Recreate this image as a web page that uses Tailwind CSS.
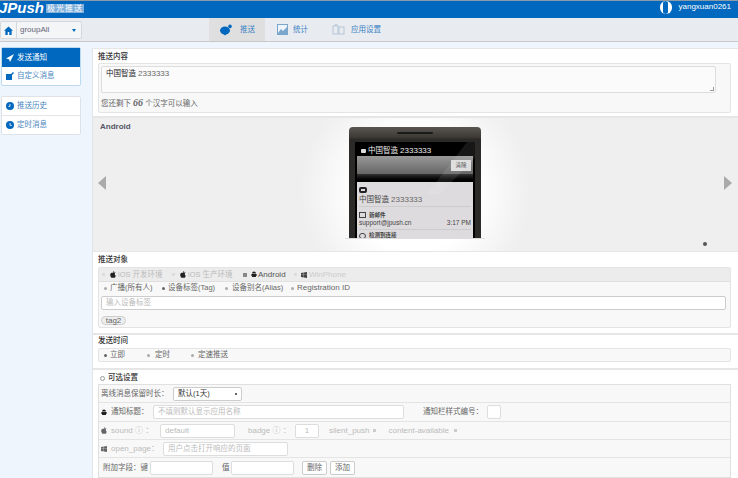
<!DOCTYPE html>
<html lang="zh">
<head>
<meta charset="UTF-8">
<title>JPush</title>
<script src="https://cdn.jsdelivr.net/npm/@tailwindcss/browser@4"></script>
</head>
<body class="w-[738px] h-[478px] overflow-hidden bg-[#eef5fd] text-[7.5px] leading-[10px] text-[#555] font-['Liberation_Sans','Noto_Sans_CJK_SC',sans-serif]">
  <!-- Top bar -->
  <div class="h-[18px] bg-[#0068be] border-t border-[#8a9aa8] flex items-center justify-between overflow-hidden">
    <div class="flex items-center -mt-[4px] -ml-px">
      <span class="text-white italic font-bold text-[15px] leading-[15px]">JPush</span>
      <span class="ml-[2px] mt-[2px] bg-[#7fb0dc] text-white text-[8px] leading-[9px] px-px tracking-[1px]">极光推送</span>
    </div>
    <div class="flex items-center gap-[7px] pr-[7px] -mt-[5px]">
      <span class="w-[12px] h-[13px] rounded-full bg-white flex justify-center overflow-hidden"><span class="w-[5px] h-[13px] bg-[#0068be] rounded-full"></span></span>
      <span class="text-white text-[8px]">yangxuan0261</span>
    </div>
  </div>
  <!-- Sub nav -->
  <div class="h-[24px] bg-[#e8ebf0] border-b border-[#c8c8c8] flex">
    <div class="w-[209px] pt-[3px]">
      <div class="w-[82px] h-[18px] bg-[#f3f5f7] border border-[#d5d8dc] rounded-[2px] flex items-center">
        <div class="w-[16px] h-full border-r border-[#d5d8dc] flex items-center justify-center">
          <svg width="9" height="9" viewBox="0 0 10 10"><path d="M5 .5 0 5.2h1.5V10h2.6V6.6h1.8V10h2.600V5.200H10z" fill="#0068be"/></svg>
        </div>
        <span class="ml-[3px] text-[#667] text-[8px]">groupAll</span>
        <span class="ml-auto mr-[5px] border-x-[2.5px] border-x-transparent border-t-[3px] border-t-[#0068be]"></span>
      </div>
    </div>
    <div class="w-[56px] bg-[#dfdfdf] flex items-center pl-[11px] gap-[8px] text-[#3b82c4]">
      <svg width="12" height="12" viewBox="0 0 12 12"><ellipse cx="5" cy="6.5" rx="5" ry="4" fill="#0068be"/><path d="M3 9.5h4l-2 2z" fill="#0068be"/><circle cx="10" cy="2.4" r="1.8" fill="#0068be"/></svg>
      <span>推送</span>
    </div>
    <div class="w-[56px] flex items-center pl-[12px] gap-[5px] text-[#3b82c4]">
      <svg width="11" height="11" viewBox="0 0 11 11"><rect x=".5" y=".5" width="10" height="10" fill="#eef4fa" stroke="#7ba6cc"/><path d="M1 9 4 5l2 2 4-4v7H1z" fill="#7ba6cc"/></svg>
      <span>统计</span>
    </div>
    <div class="flex items-center pl-[11px] gap-[6px] text-[#3b82c4]">
      <svg width="13" height="11" viewBox="0 0 13 11"><rect x="1" y="2" width="5" height="8" fill="none" stroke="#b5c6d6"/><rect x="7" y="3" width="5" height="7" fill="none" stroke="#b5c6d6"/><path d="M2 2 4 0l2 2" fill="none" stroke="#b5c6d6"/></svg>
      <span>应用设置</span>
    </div>
  </div>
  <div class="flex">
    <!-- Sidebar -->
    <div class="w-[92px] pt-[6px] pl-px shrink-0">
      <div class="w-[80px] h-[39px] border border-[#bcd9f2] rounded-[2px] bg-white -mt-px">
        <div class="h-[19px] bg-[#0068be] text-white flex items-center gap-[3px] pl-[4px]">
          <svg width="8" height="8" viewBox="0 0 8 8"><path d="M8 0 0 4.5l3 .7L4 8z" fill="#fff"/></svg>
          <span>发送通知</span>
        </div>
        <div class="h-[18px] text-[#4a86bd] flex items-center gap-[3px] pl-[4px]">
          <svg width="8" height="8" viewBox="0 0 8 8"><rect y="2" width="6" height="6" fill="#0068be"/><path d="M4 3 7 0l1 1-3 3z" fill="#0068be"/></svg>
          <span>自定义消息</span>
        </div>
      </div>
      <div class="w-[80px] h-[39px] mt-[10px] border border-[#dfe3e8] rounded-[2px] bg-white divide-y divide-[#e4e7ea]">
        <div class="h-[19px] text-[#4a86bd] flex items-center gap-[3px] pl-[4px]">
          <svg width="8" height="8" viewBox="0 0 8 8"><circle cx="4" cy="4" r="4" fill="#0068be"/><path d="M4 2v2.4H2.4" fill="none" stroke="#fff" stroke-width=".8"/></svg>
          <span>推送历史</span>
        </div>
        <div class="h-[18px] text-[#4a86bd] flex items-center gap-[3px] pl-[4px]">
          <svg width="8" height="8" viewBox="0 0 8 8"><circle cx="4" cy="4" r="4" fill="#0068be"/><path d="M4 2v2.4h1.8" fill="none" stroke="#fff" stroke-width=".8"/></svg>
          <span>定时消息</span>
        </div>
      </div>
    </div>
    <!-- Main -->
    <div class="w-[646px] mt-[6px] bg-white border-l border-[#e2e5e8]">
      <!-- content -->
      <div class="h-[70px] px-[5px] pt-[3px] border-y border-b-2 border-[#e6e6e6]">
        <div class="font-medium text-[#333] h-[10px]">推送内容</div>
        <div class="mt-px h-[50px] w-[633px] bg-[#f8f8f8] border border-[#e4e4e4] rounded-[2px] pl-[2px] pt-[2px]">
          <div class="relative w-[615px] h-[27px] bg-[#fbfbfb] border border-[#ddd] rounded-[2px] px-[4px] pt-[2px] text-[#222]">
            中国智造 <span class="text-[8px] text-[#666]">2333333</span>
            <span class="absolute right-px bottom-px w-[4px] h-[4px] border-b border-r border-[#999]"></span>
          </div>
          <div class="mt-[5px] text-[#666]">您还剩下 <b class="font-['Liberation_Serif',serif] italic text-[10px]">66</b> 个汉字可以输入</div>
        </div>
      </div>
      <!-- preview -->
      <div class="relative h-[133px] bg-[radial-gradient(circle_at_50%_55%,#ffffff_0,#ffffff_60px,#efefef_115px)] overflow-hidden">
        <div class="absolute left-[7px] top-[4px] font-bold text-[8px] text-[#556]">Android</div>
        <span class="absolute left-[5px] top-[58px] border-y-[7px] border-y-transparent border-r-[8px] border-r-[#aaa]"></span>
        <span class="absolute right-[6px] top-[58px] border-y-[7px] border-y-transparent border-l-[8px] border-l-[#aaa]"></span>
        <span class="absolute left-[610px] top-[124px] w-[4px] h-[4px] rounded-full bg-[#555]"></span>
        <!-- phone -->
        <div class="absolute left-[252px] top-[120px] w-[140px] h-px bg-[#ddd]"></div>
        <div class="absolute left-[256px] top-[9px] w-[132px] h-[111px] bg-[linear-gradient(#5a5550,#3a3733_11px,#2b2a28_12px)] rounded-t-[4px] overflow-hidden pt-[15px] px-[6px]">
          <div class="absolute left-[48px] top-[5px] w-[36px] h-[2px] bg-[#1a1a1a] rounded-full"></div>
          <div class="relative h-[96px] bg-black pt-[5px] px-[2px]">
            <div class="h-[8px] flex items-center gap-[2px] pl-[4px] text-[#eee]">
              <span class="w-[5px] h-[4px] bg-[#ddd] rounded-[1px]"></span><span>中国智造 <span class="text-[8px]">2333333</span></span>
            </div>
            <div class="mt-px h-[18px] bg-gradient-to-b from-[#999] to-[#666] flex items-center justify-end pr-[2px]">
              <span class="w-[20px] h-[11px] bg-[#ddd] text-[#444] text-[5.5px] leading-[11px] text-center">清除</span>
            </div>
            <div class="h-[8px] bg-gradient-to-b from-[#333] to-black"></div>
            <div class="h-[56px] bg-[#dddbdd] px-[2px] pt-[5px] text-[#444]">
              <span class="block w-[8px] h-[6px] border-2 border-[#222] rounded-[2px]"></span>
              <div class="h-[11px] mt-[1px] leading-[11px] border-b border-[#ccc] box-content pb-px">中国智造 <span class="text-[8px] text-[#666]">2333333</span></div>
              <div class="mt-[4px] text-[5.5px] leading-[8px] font-bold flex items-center gap-[3px]"><span class="w-[7px] h-[6px] border border-[#444]"></span>新邮件</div>
              <div class="text-[6.5px] leading-[8px] flex justify-between pb-[2px] border-b border-[#ccc]"><span>support@jpush.cn</span><span>3:17 PM</span></div>
              <div class="mt-[2px] flex items-center gap-[3px] text-[5.5px] leading-[7px] font-bold"><span class="w-[7px] h-[6px] rounded-full border border-[#444]"></span>检测到连接</div>
            </div>
            <svg class="absolute left-0 top-0" width="120" height="96" viewBox="0 0 120 96"><path d="M112 0h8v16L85 52H72z" fill="#fff" fill-opacity=".09"/></svg>
          </div>
        </div>
      </div>
      <!-- target -->
      <div class="h-[84px] px-[5px] pt-[3px] border-t border-b-2 border-[#e6e6e6]">
        <div class="font-medium text-[#333] h-[10px]">推送对象</div>
        <div class="mt-[2px] w-[633px] h-[61px] bg-[#f8f8f8] border border-[#e4e4e4] rounded-[2px]">
          <div class="h-[14px] bg-[#ececec] border-b border-[#e0e0e0] flex items-center text-[#bbb]">
            <span class="w-[73px] flex items-center pl-[3px]">
              <span class="w-[3px] h-[3px] bg-[#ddd] mr-[5px]"></span>
              <svg class="mr-[2px]" width="6" height="7" viewBox="0 0 6 7"><path d="M3 1.800C2 1.400.4 1.600.2 3.600c-.1 1.500 1 3.400 1.800 3.300.5 0 .6-.3 1-.3s.5.3 1 .3c.7 0 1.500-1.100 1.800-2.200-1.300-.6-1.400-2.500-.1-3C5.200 1.300 3.900 1.300 3 1.800zM3 1.500C3 .8 3.500.1 4.200 0c.1.800-.5 1.500-1.200 1.500z" fill="#222"/></svg>
              iOS 开发环境</span>
            <span class="w-[71px] flex items-center">
              <span class="w-[3px] h-[3px] bg-[#ddd] mr-[5px]"></span>
              <svg class="mr-[2px]" width="6" height="7" viewBox="0 0 6 7"><path d="M3 1.800C2 1.400.4 1.600.2 3.600c-.1 1.500 1 3.400 1.800 3.300.5 0 .6-.3 1-.3s.5.3 1 .3c.7 0 1.500-1.100 1.800-2.200-1.300-.6-1.400-2.500-.1-3C5.200 1.300 3.900 1.300 3 1.800zM3 1.500C3 .8 3.500.1 4.200 0c.1.800-.5 1.500-1.200 1.500z" fill="#222"/></svg>
              iOS 生产环境</span>
            <span class="w-[51px] flex items-center text-[#555]">
              <span class="w-[4px] h-[4px] bg-[#888] mr-[4px]"></span>
              <svg class="mr-[1px]" width="6" height="7" viewBox="0 0 6 7"><path d="M1 2.500a2 2 0 0 1 4 0zM1 2.900h4v2.500a.5.5 0 0 1-.5.5h-3a.5.5 0 0 1-.5-.5zM0 2.900h.6v2H0zM5.400 2.900H6v2h-.6z" fill="#222"/></svg>
              <span class="text-[8px]">Android</span></span>
            <span class="flex items-center text-[8px] text-[#ccc]">
              <span class="w-[3px] h-[3px] bg-[#ddd] mr-[4px]"></span>
              <svg class="mr-[2px]" width="6" height="6" viewBox="0 0 6 6"><path d="M0 1 2.700.6v2.200H0zM3 .5 6 0v2.800H3zM0 3.100h2.700v2.300L0 5zM3 3.100h3V6l-3-.5z" fill="#444"/></svg>
              WinPhone</span>
          </div>
          <div class="h-[14px] pb-[2px] flex items-center text-[#666]">
            <span class="w-[62px] flex items-center pl-[5px]"><span class="w-[3px] h-[3px] rounded-full bg-[#aaa] mr-[3px]"></span>广播(所有人)</span>
            <span class="w-[63px] flex items-center ml-px"><span class="w-[3px] h-[3px] rounded-full bg-[#666] mr-[3px]"></span>设备标签(Tag)</span>
            <span class="w-[66px] flex items-center"><span class="w-[3px] h-[3px] rounded-full bg-[#aaa] mr-[4px]"></span>设备别名(Alias)</span>
            <span class="flex items-center text-[8px]"><span class="w-[3px] h-[3px] rounded-full bg-[#aaa] mr-[3px]"></span>Registration ID</span>
          </div>
          <div class="ml-[2px] w-[625px] h-[14px] bg-white border border-[#ccc] rounded-[2px] pl-[4px] text-[#bbb] leading-[12px]">输入设备标签</div>
          <div class="mt-[6px] ml-[2px] w-[25px] h-[9px] bg-[#eee] border border-[#ccc] rounded-full text-center text-[8px] text-[#666] leading-[7px]">tag2</div>
        </div>
      </div>
      <!-- time -->
      <div class="h-[35px] px-[5px] pt-px border-b-2 border-[#e6e6e6]">
        <div class="font-medium text-[#333] h-[10px]">发送时间</div>
        <div class="mt-[2px] w-[633px] h-[14px] bg-[#f8f8f8] border border-[#e4e4e4] rounded-[2px] flex items-center text-[#666]">
          <span class="w-[48px] flex items-center pl-[5px]"><span class="w-[3px] h-[3px] rounded-full bg-[#666] mr-[3px]"></span>立即</span>
          <span class="w-[44px] flex items-center"><span class="w-[3px] h-[3px] rounded-full bg-[#aaa] mr-[5px]"></span>定时</span>
          <span class="flex items-center"><span class="w-[3px] h-[3px] rounded-full bg-[#aaa] mr-[4px]"></span>定速推送</span>
        </div>
      </div>
      <!-- options -->
      <div class="px-[5px] pt-[3px]">
        <div class="flex items-center gap-[3px] font-medium text-[#333] h-[10px] pl-[2px]"><span class="w-[5px] h-[5px] rounded-full border border-[#999]"></span>可选设置</div>
        <div class="mt-px w-[633px] border border-[#e0e0e0] bg-[#f8f8f8] divide-y divide-[#e4e4e4] text-[#666]">
          <div class="h-[18px] flex items-center pl-[2px]">
            <span class="w-[72px]">离线消息保留时长：</span>
            <div class="w-[69px] h-[14px] bg-white border border-[#ccc] rounded-[2px] flex items-center px-[4px] text-[#333]">默认(1天)<span class="ml-auto w-[2px] h-[2px] bg-[#333] rounded-full"></span></div>
          </div>
          <div class="h-[19px] flex items-center pl-[2px]">
            <svg class="mr-[4px]" width="6" height="7" viewBox="0 0 6 7"><path d="M1 2.500a2 2 0 0 1 4 0zM1 2.900h4v2.500a.5.5 0 0 1-.5.5h-3a.5.5 0 0 1-.5-.5zM0 2.900h.6v2H0zM5.400 2.900H6v2h-.6z" fill="#222"/></svg>
            <span class="w-[42px]">通知标题：</span>
            <div class="w-[251px] h-[14px] bg-white border border-[#ddd] rounded-[2px] pl-[4px] text-[#bbb] leading-[12px]">不填则默认显示应用名称</div>
            <span class="ml-[19px] w-[64px]">通知栏样式编号：</span>
            <div class="w-[14px] h-[14px] bg-white border border-[#ddd] rounded-[2px]"></div>
          </div>
          <div class="h-[18px] flex items-center pl-[2px] text-[8px] text-[#bbb]">
            <svg class="mr-[4px]" width="6" height="7" viewBox="0 0 6 7"><path d="M3 1.800C2 1.400.4 1.600.2 3.600c-.1 1.500 1 3.400 1.800 3.300.5 0 .6-.3 1-.3s.5.3 1 .3c.7 0 1.500-1.100 1.800-2.200-1.300-.6-1.400-2.500-.1-3C5.200 1.300 3.900 1.300 3 1.800zM3 1.500C3 .8 3.500.1 4.200 0c.1.800-.5 1.500-1.200 1.500z" fill="#666"/></svg>
            <span class="w-[49px]">sound ⓘ ：</span>
            <div class="w-[75px] h-[14px] bg-white border border-[#ddd] rounded-[2px] pl-[4px] leading-[12px]">default</div>
            <span class="ml-[13px] w-[47px]">badge ⓘ ：</span>
            <div class="w-[24px] h-[14px] bg-white border border-[#ddd] rounded-[2px] text-center leading-[12px]">1</div>
            <span class="ml-[10px]">silent_push</span><span class="w-[3px] h-[3px] bg-[#ccc] mx-[4px]"></span>
            <span class="ml-[8px]">content-available</span><span class="w-[3px] h-[3px] bg-[#ccc] mx-[5px]"></span>
          </div>
          <div class="h-[18px] flex items-center pl-[2px] text-[8px] text-[#bbb]">
            <svg class="mr-[4px]" width="6" height="6" viewBox="0 0 6 6"><path d="M0 1 2.700.6v2.200H0zM3 .5 6 0v2.800H3zM0 3.100h2.700v2.300L0 5zM3 3.100h3V6l-3-.5z" fill="#666"/></svg>
            <span class="w-[52px]">open_page：</span>
            <div class="w-[125px] h-[14px] bg-white border border-[#ddd] rounded-[2px] pl-[4px] leading-[12px] text-[7.5px]">用户点击打开响应的页面</div>
          </div>
          <div class="h-[19px] flex items-center pl-[4px]">
            <span class="w-[47px]">附加字段：键</span>
            <div class="w-[63px] h-[14px] bg-white border border-[#ddd] rounded-[2px]"></div>
            <span class="ml-[9px] w-[9px]">值</span>
            <div class="w-[63px] h-[14px] bg-white border border-[#ddd] rounded-[2px]"></div>
            <div class="ml-[8px] w-[25px] h-[14px] bg-white border border-[#ccc] rounded-[2px] text-center leading-[12px]">删除</div>
            <div class="ml-[3px] w-[25px] h-[14px] bg-white border border-[#ccc] rounded-[2px] text-center leading-[12px]">添加</div>
          </div>
        </div>
      </div>
    </div>
  </div>
</body>
</html>
